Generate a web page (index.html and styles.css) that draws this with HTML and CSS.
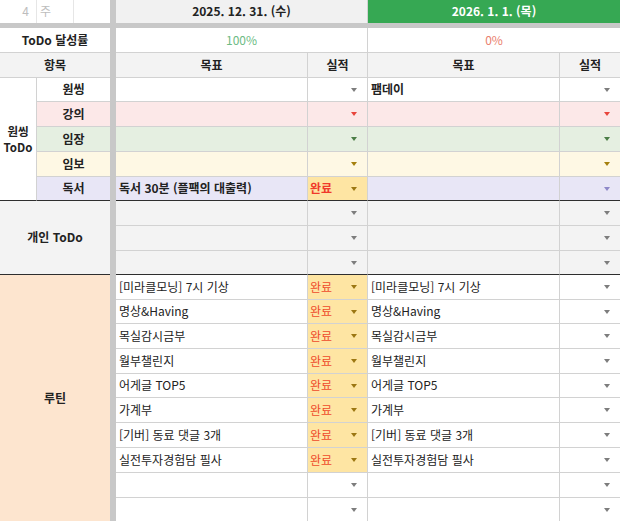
FILE: index.html
```html
<!DOCTYPE html>
<html lang="ko">
<head>
<meta charset="utf-8">
<title>ToDo Sheet</title>
<link rel="stylesheet" href="styles.css">
</head>
<body>
<div class="sheet">
  <div class="vsep"></div>
  <div class="hsep"></div>

  <!-- row 1 -->
  <div class="c top week-num">4</div>
  <div class="c top week-lbl">주</div>
  <div class="c top edge"></div>
  <div class="c top date span2">2025. 12. 31. (수)</div>
  <div class="c top date today span2 last">2026. 1. 1. (목)</div>

  <!-- row: ToDo 달성률 -->
  <div class="c b center span3 edge">ToDo 달성률</div>
  <div class="c center span2 pct-good">100%</div>
  <div class="c center span2 last pct-bad">0%</div>

  <!-- header -->
  <div class="c b center span3 edge hdr">항목</div>
  <div class="c b center hdr">목표</div>
  <div class="c b center hdr">실적</div>
  <div class="c b center hdr">목표</div>
  <div class="c b center hdr last">실적</div>

  <!-- 원씽 ToDo -->
  <div class="c b center group-one sec-end"><span class="stack"><span>원씽</span><span>ToDo</span></span></div>
  <div class="c b center span2 edge">원씽</div>
  <div class="c"></div>
  <div class="c res"><i class="dd"></i></div>
  <div class="c b">팸데이</div>
  <div class="c res last"><i class="dd"></i></div>

  <div class="c b center span2 edge pink">강의</div>
  <div class="c pink"></div>
  <div class="c res pink"><i class="dd dd-red"></i></div>
  <div class="c pink"></div>
  <div class="c res pink last"><i class="dd dd-red"></i></div>

  <div class="c b center span2 edge green">임장</div>
  <div class="c green"></div>
  <div class="c res green"><i class="dd dd-green"></i></div>
  <div class="c green"></div>
  <div class="c res green last"><i class="dd dd-green"></i></div>

  <div class="c b center span2 edge yellow">임보</div>
  <div class="c yellow"></div>
  <div class="c res yellow"><i class="dd dd-yellow"></i></div>
  <div class="c yellow"></div>
  <div class="c res yellow last"><i class="dd dd-yellow"></i></div>

  <div class="c b center span2 edge lav sec-end">독서</div>
  <div class="c b lav sec-end">독서 30분 (플팩의 대출력)</div>
  <div class="c res done sec-end"><span class="done-txt b">완료</span><i class="dd dd-done"></i></div>
  <div class="c lav sec-end"></div>
  <div class="c res lav last sec-end"><i class="dd dd-lav"></i></div>

  <!-- 개인 ToDo -->
  <div class="c b center span3 edge gray group-personal sec-end">개인 ToDo</div>
  <div class="c gray"></div>
  <div class="c res gray"><i class="dd"></i></div>
  <div class="c gray"></div>
  <div class="c res gray last"><i class="dd"></i></div>

  <div class="c gray"></div>
  <div class="c res gray"><i class="dd"></i></div>
  <div class="c gray"></div>
  <div class="c res gray last"><i class="dd"></i></div>

  <div class="c gray sec-end"></div>
  <div class="c res gray sec-end"><i class="dd"></i></div>
  <div class="c gray sec-end"></div>
  <div class="c res gray last sec-end"><i class="dd"></i></div>

  <!-- 루틴 -->
  <div class="c b center span3 edge peach group-routine">루틴</div>

  <div class="c">[미라클모닝] 7시 기상</div>
  <div class="c res done"><span class="done-txt">완료</span><i class="dd dd-done"></i></div>
  <div class="c">[미라클모닝] 7시 기상</div>
  <div class="c res last"><i class="dd"></i></div>

  <div class="c">명상&amp;Having</div>
  <div class="c res done"><span class="done-txt">완료</span><i class="dd dd-done"></i></div>
  <div class="c">명상&amp;Having</div>
  <div class="c res last"><i class="dd"></i></div>

  <div class="c">목실감시금부</div>
  <div class="c res done"><span class="done-txt">완료</span><i class="dd dd-done"></i></div>
  <div class="c">목실감시금부</div>
  <div class="c res last"><i class="dd"></i></div>

  <div class="c">월부챌린지</div>
  <div class="c res done"><span class="done-txt">완료</span><i class="dd dd-done"></i></div>
  <div class="c">월부챌린지</div>
  <div class="c res last"><i class="dd"></i></div>

  <div class="c">어게글 TOP5</div>
  <div class="c res done"><span class="done-txt">완료</span><i class="dd dd-done"></i></div>
  <div class="c">어게글 TOP5</div>
  <div class="c res last"><i class="dd"></i></div>

  <div class="c">가계부</div>
  <div class="c res done"><span class="done-txt">완료</span><i class="dd dd-done"></i></div>
  <div class="c">가계부</div>
  <div class="c res last"><i class="dd"></i></div>

  <div class="c">[기버] 동료 댓글 3개</div>
  <div class="c res done"><span class="done-txt">완료</span><i class="dd dd-done"></i></div>
  <div class="c">[기버] 동료 댓글 3개</div>
  <div class="c res last"><i class="dd"></i></div>

  <div class="c">실전투자경험담 필사</div>
  <div class="c res done"><span class="done-txt">완료</span><i class="dd dd-done"></i></div>
  <div class="c">실전투자경험담 필사</div>
  <div class="c res last"><i class="dd"></i></div>

  <div class="c"></div>
  <div class="c res"><i class="dd"></i></div>
  <div class="c"></div>
  <div class="c res last"><i class="dd"></i></div>

  <div class="c"></div>
  <div class="c res"><i class="dd"></i></div>
  <div class="c"></div>
  <div class="c res last"><i class="dd"></i></div>
</div>
</body>
</html>
```

FILE: styles.css
```css
html, body {
  margin: 0;
  padding: 0;
  background: #ffffff;
}

.sheet {
  width: 620px;
  display: grid;
  grid-template-columns: 37px 37px 36px 6px 192px 60px 192px 60px;
  grid-template-rows: 23px 5px 25px 25px 24px 25px 25px 25px 24px 25px 25px 24px 25px 24px 25px 25px 24px 25px 25px 25px 25px 24px;
  font-family: "Noto Sans CJK KR", "Noto Sans", sans-serif;
  font-size: 12px;
  color: #222222;
  overflow: hidden;
}

.vsep {
  grid-column: 4;
  grid-row: 1 / -1;
  background: #c8c8c8;
}

.hsep {
  grid-column: 1 / -1;
  grid-row: 2;
  background: #c8c8c8;
}

.c {
  box-sizing: border-box;
  display: flex;
  align-items: center;
  padding: 0 3px;
  border-right: 1px solid #d2d2d2;
  border-bottom: 1px solid #d2d2d2;
  white-space: nowrap;
  overflow: hidden;
  line-height: 1.2;
  background: #ffffff;
}

.top { border-bottom: none; }
.edge { border-right: none; }
.last { border-right: none; }

.span2 { grid-column: span 2; }
.span3 { grid-column: span 3; }

.b { font-weight: 700; }
.center { justify-content: center; text-align: center; }

.week-num {
  justify-content: flex-end;
  padding-right: 7px;
  color: #bdbdbd;
  border-right-color: #e6e6e6;
}
.week-lbl {
  color: #bdbdbd;
  padding-left: 3px;
  border-right-color: #e6e6e6;
}

.date {
  justify-content: center;
  background: #f1f1f1;
  font-weight: 700;
  color: #222222;
}
.date.today {
  background: #36a853;
  color: #ffffff;
}

.pct-good { color: #6dbb84; }
.pct-bad { color: #ea7f6e; }

.hdr { background: #f3f3f3; }

.group-one {
  grid-row: span 5;
  padding: 0;
}
.stack {
  display: flex;
  flex-direction: column;
  align-items: center;
  gap: 1px;
  font-size: 11.5px;
  line-height: 15px;
}
.group-personal { grid-row: span 3; }
.group-routine { grid-row: span 10; }

.pink { background: #fce8e8; }
.green { background: #e5efe1; }
.yellow { background: #fef8e4; }
.lav { background: #e8e6f6; }
.gray { background: #f3f3f3; }
.peach { background: #fde5cf; }

.sec-end { border-bottom-color: #2e2e2e; }

.res {
  padding-left: 2px;
  padding-right: 10px;
}

.done { background: #fee5a3; }
.done-txt { color: #ee4b2b; }
.done-txt.b { color: #f03a2a; }

.dd {
  margin-left: auto;
  width: 0;
  height: 0;
  border-left: 3.5px solid transparent;
  border-right: 3.5px solid transparent;
  border-top: 4px solid #7d7d7d;
}
.dd-red { border-top-color: #e8453c; }
.dd-green { border-top-color: #4b7d46; }
.dd-yellow { border-top-color: #a5800f; }
.dd-lav { border-top-color: #8e88c8; }
.dd-done { border-top-color: #9c7712; }
```
